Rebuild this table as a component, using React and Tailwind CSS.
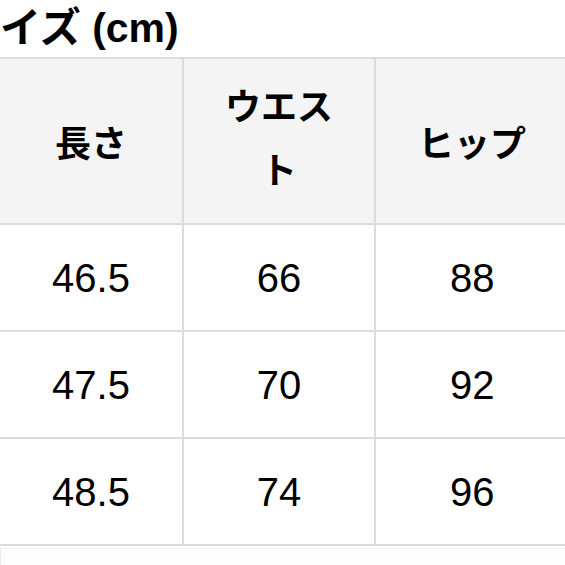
export default function App() {
  const rows = [
    ["46.5", "66", "88"],
    ["47.5", "70", "92"],
    ["48.5", "74", "96"],
  ];
  const jp = { fontFamily: '"Noto Sans CJK JP", "Noto Sans", sans-serif' };
  const title = { fontFamily: '"Liberation Sans", "Noto Sans CJK JP", sans-serif' };
  const num = { fontFamily: '"Liberation Sans", Arial, sans-serif' };
  return (
    <div className="w-[565px] h-[565px] overflow-hidden bg-white text-black">
      <div
        className="h-[57px] pt-[4px] text-[41px] font-bold leading-[48px] whitespace-nowrap"
        style={title}
      >
        イズ (cm)
      </div>
      <div className="w-[600px] border-t-2 border-[#dcdcdc]">
        <div className="grid grid-cols-[184px_192px_224px] bg-[#f4f4f4] border-b-2 border-[#dcdcdc] h-[166px]" style={jp}>
          <div className="flex items-center justify-center text-[36px] font-bold border-r-2 border-[#dcdcdc]">
            長さ
          </div>
          <div className="flex items-center justify-center border-r-2 border-[#dcdcdc]">
            <div className="w-[140px] text-center text-[36px] font-bold leading-[64px] mb-[10px]">
              ウエスト
            </div>
          </div>
          <div className="flex items-center pl-[42px] text-[36px] font-bold">
            ヒップ
          </div>
        </div>
        {rows.map((r, i) => (
          <div
            key={i}
            className="grid grid-cols-[184px_192px_224px] border-b-2 border-[#dcdcdc] h-[107px]"
            style={num}
          >
            <div className="flex items-center justify-center text-[40px] border-r-2 border-[#dcdcdc]">
              {r[0]}
            </div>
            <div className="flex items-center justify-center text-[40px] border-r-2 border-[#dcdcdc]">
              {r[1]}
            </div>
            <div className="flex items-center pl-[74px] text-[40px]">
              {r[2]}
            </div>
          </div>
        ))}
        <div className="mt-[2px] h-[40px] bg-[#fdfdfd] border-t border-l border-[#ececec]"></div>
      </div>
    </div>
  );
}
